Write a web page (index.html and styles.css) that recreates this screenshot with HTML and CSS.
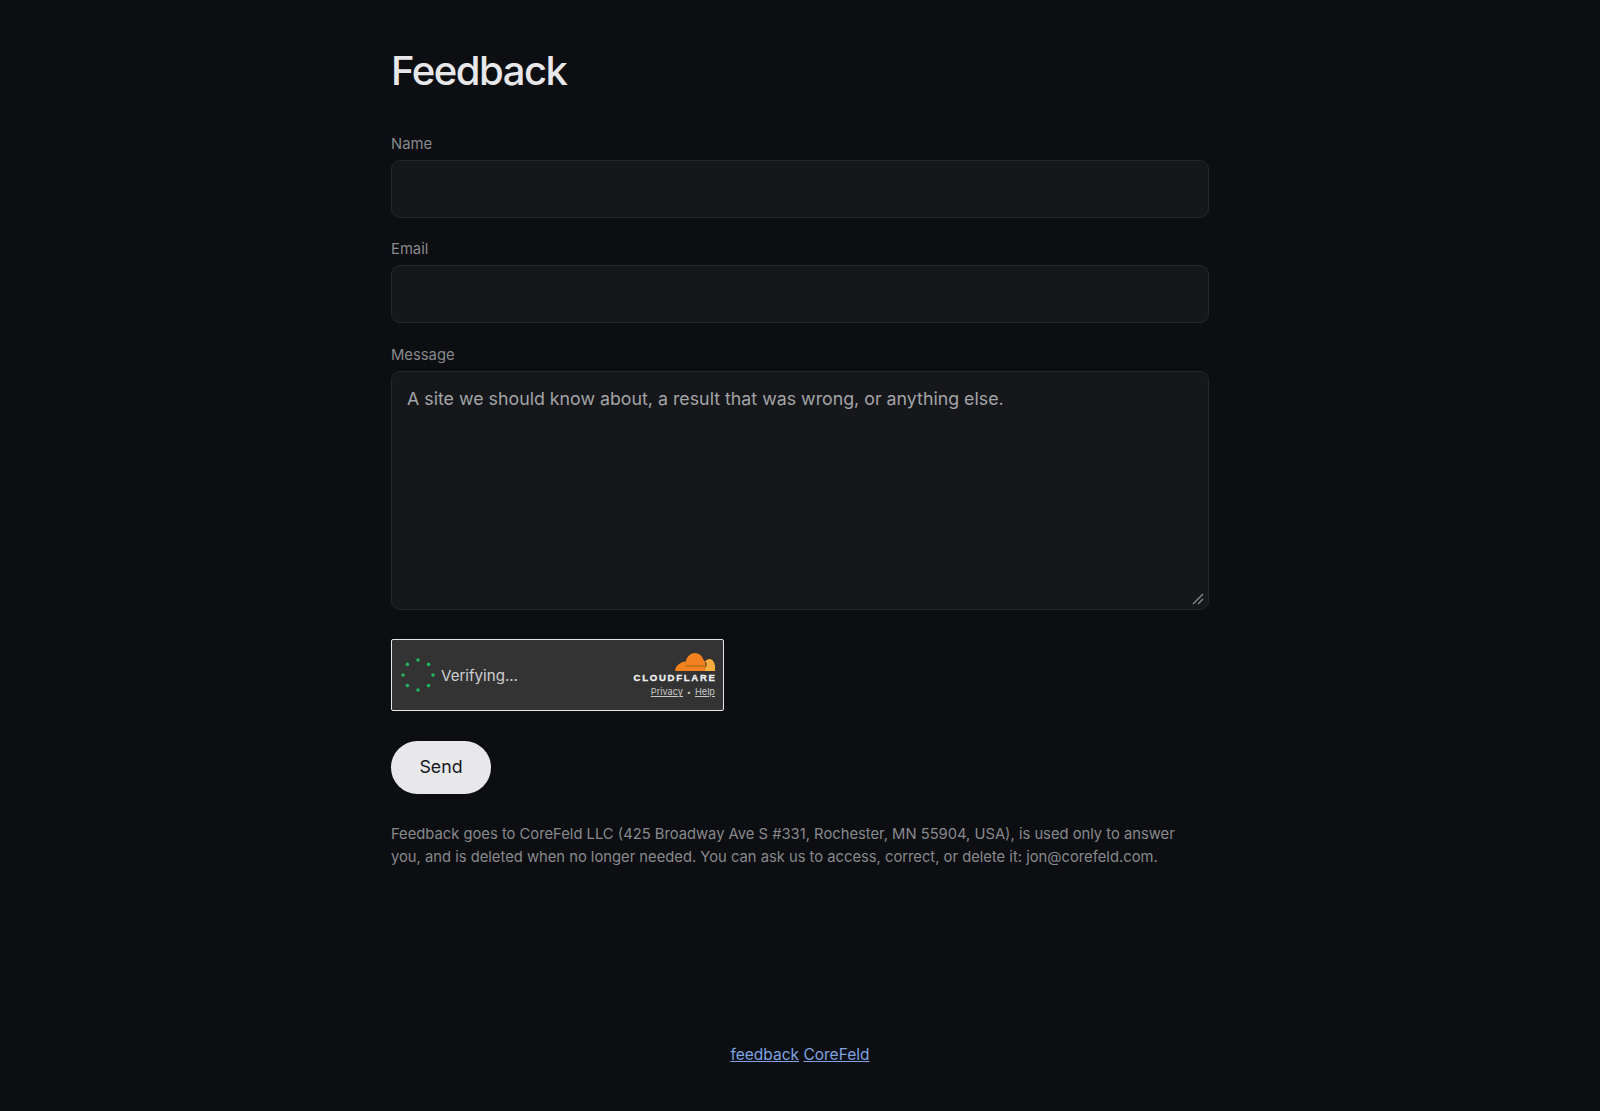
FILE: index.html
```html
<!DOCTYPE html>
<html lang="en">
<head>
    <meta charset="UTF-8">
    <meta name="viewport" content="width=device-width, initial-scale=1.0">
    <title>Feedback</title>
    <link rel="stylesheet" href="styles.css">
</head>
<body>
    <main class="page">
        <h1 class="title">Feedback</h1>
        <form class="form">
            <label class="label" for="name">Name</label>
            <input class="field" type="text" id="name">

            <label class="label" for="email">Email</label>
            <input class="field" type="email" id="email">

            <label class="label" for="message">Message</label>
            <div class="message-wrap">
                <textarea class="field message" id="message" placeholder="A site we should know about, a result that was wrong, or anything else."></textarea>
                <svg class="grip" width="12" height="12" viewBox="0 0 12 12">
                    <path d="M1 11L11 1M6 11L11 6" stroke="#8a8b8e" stroke-width="1.3" fill="none"/>
                </svg>
            </div>

            <div class="turnstile">
                <svg class="spinner" width="38" height="38" viewBox="0 0 38 38">
                    <g fill="#22b45a">
                        <circle cx="19" cy="4" r="1.8"/>
                        <circle cx="29.6" cy="8.4" r="1.8"/>
                        <circle cx="34" cy="19" r="1.8"/>
                        <circle cx="29.6" cy="29.600" r="1.8"/>
                        <circle cx="19" cy="34" r="1.8"/>
                        <circle cx="8.4" cy="29.600" r="1.8"/>
                        <circle cx="4" cy="19" r="1.8"/>
                        <circle cx="8.4" cy="8.4" r="1.8"/>
                    </g>
                </svg>
                <span class="turnstile-text">Verifying...</span>
                <div class="cf-brand">
                    <svg class="cf-cloud" width="40" height="18" viewBox="0 0 40 18">
                        <path fill="#faad3f" d="M29 18L31.500 12.500C32 10.500 31.500 9.500 30 8.500 31 7 33 6 34.500 6 37.500 6 39.800 9.500 40 13V18Z"/>
                        <path fill="#f48120" d="M0 18C.5 14 2.500 11.500 5 10.500 6.500 9 8.500 8.500 10.500 8.800 12 3.500 15.500 0 19.500 0 24 0 27.500 3 28.500 7L30 8.500C31 11 30.500 14 29.500 18Z"/>
                        <path fill="#a8641c" d="M10 12.500H31V13.500H10Z"/>
                    </svg>
                    <div class="cf-word">CLOUDFLARE</div>
                    <div class="cf-links"><a href="#">Privacy</a><span class="cf-dot">•</span><a href="#">Help</a></div>
                </div>
            </div>

            <button class="send" type="button">Send</button>
        </form>
        <p class="note">Feedback goes to CoreFeld LLC (425 Broadway Ave S #331, Rochester, MN 55904, USA), is used only to answer you, and is deleted when no longer needed. You can ask us to access, correct, or delete it: jon@corefeld.com.</p>
    </main>
    <footer class="footer">
        <a href="#">feedback</a> <a href="#">CoreFeld</a>
    </footer>
</body>
</html>
```

FILE: styles.css
```css
body {
    margin: 0;
    height: 1111px;
    background: #0c0e12;
    color: #e8e8ea;
    font-family: Inter, "Noto Sans", sans-serif;
    display: flex;
    flex-direction: column;
}

.page {
    width: 818px;
    margin: 0 auto;
    flex: 1;
}

.title {
    margin: 45px 0 0;
    font-size: 40px;
    line-height: 52px;
    font-weight: 500;
    letter-spacing: -1.45px;
    color: #e8e8ea;
}

.form {
    display: flex;
    flex-direction: column;
    align-items: flex-start;
    margin-top: 35px;
}

.label {
    font-size: 14.8px;
    line-height: 24px;
    color: #88898c;
    margin-bottom: 4px;
}

.field {
    display: block;
    box-sizing: border-box;
    width: 100%;
    height: 58px;
    margin-bottom: 19.45px;
    padding: 14px 15px;
    background: #15171b;
    border: 1px solid #24262b;
    border-radius: 9px;
    color: #e8e8ea;
    font-family: inherit;
    font-size: 17.8px;
    line-height: 26px;
    outline: none;
}

.message-wrap {
    position: relative;
    width: 100%;
    margin-bottom: 29.5px;
}

.message {
    height: 239px;
    margin-bottom: 0;
    resize: none;
}

.message::placeholder {
    color: #a3a4a6;
    opacity: 1;
}

.grip {
    position: absolute;
    right: 5px;
    bottom: 5px;
}

.turnstile {
    box-sizing: border-box;
    display: flex;
    align-items: center;
    width: 333px;
    height: 72px;
    padding: 0 8px 0 6.5px;
    background: #333333;
    border: 1px solid #e6e6e6;
    border-radius: 2px;
}

.spinner {
    flex: none;
}

.turnstile-text {
    margin-left: 4.5px;
    font-size: 15.1px;
    color: #cfcfcf;
}

.cf-brand {
    margin-left: auto;
    align-self: flex-start;
    display: flex;
    flex-direction: column;
    align-items: flex-end;
    padding-top: 13px;
}

.cf-cloud {
    display: block;
}

.cf-word {
    margin-top: 1px;
    font-family: "Liberation Sans", sans-serif;
    font-size: 9.6px;
    line-height: 11px;
    font-weight: 700;
    letter-spacing: 1.7px;
    margin-right: -1.7px;
    color: #f2f2f2;
    -webkit-text-stroke: 0.3px #f2f2f2;
}

.cf-links {
    margin-top: 3px;
    font-size: 9.2px;
    line-height: 12px;
    color: #c8c8c8;
}

.cf-links a {
    color: #c8c8c8;
}

.cf-dot {
    margin: 0 4px;
    font-size: 7px;
}

.send {
    margin-top: 30px;
    width: 100px;
    height: 53px;
    padding: 0 0 2px;
    border: none;
    border-radius: 27px;
    background: #e8e8ea;
    color: #16181c;
    font-family: inherit;
    font-size: 17.8px;
    cursor: pointer;
}

.note {
    margin: 28.5px 0 0;
    max-width: 800px;
    font-size: 14.75px;
    line-height: 23.5px;
    color: #88898c;
}

.footer {
    height: 68px;
    text-align: center;
    font-size: 15.5px;
    line-height: 24px;
}

.footer a {
    color: #7fa4e0;
}
```
